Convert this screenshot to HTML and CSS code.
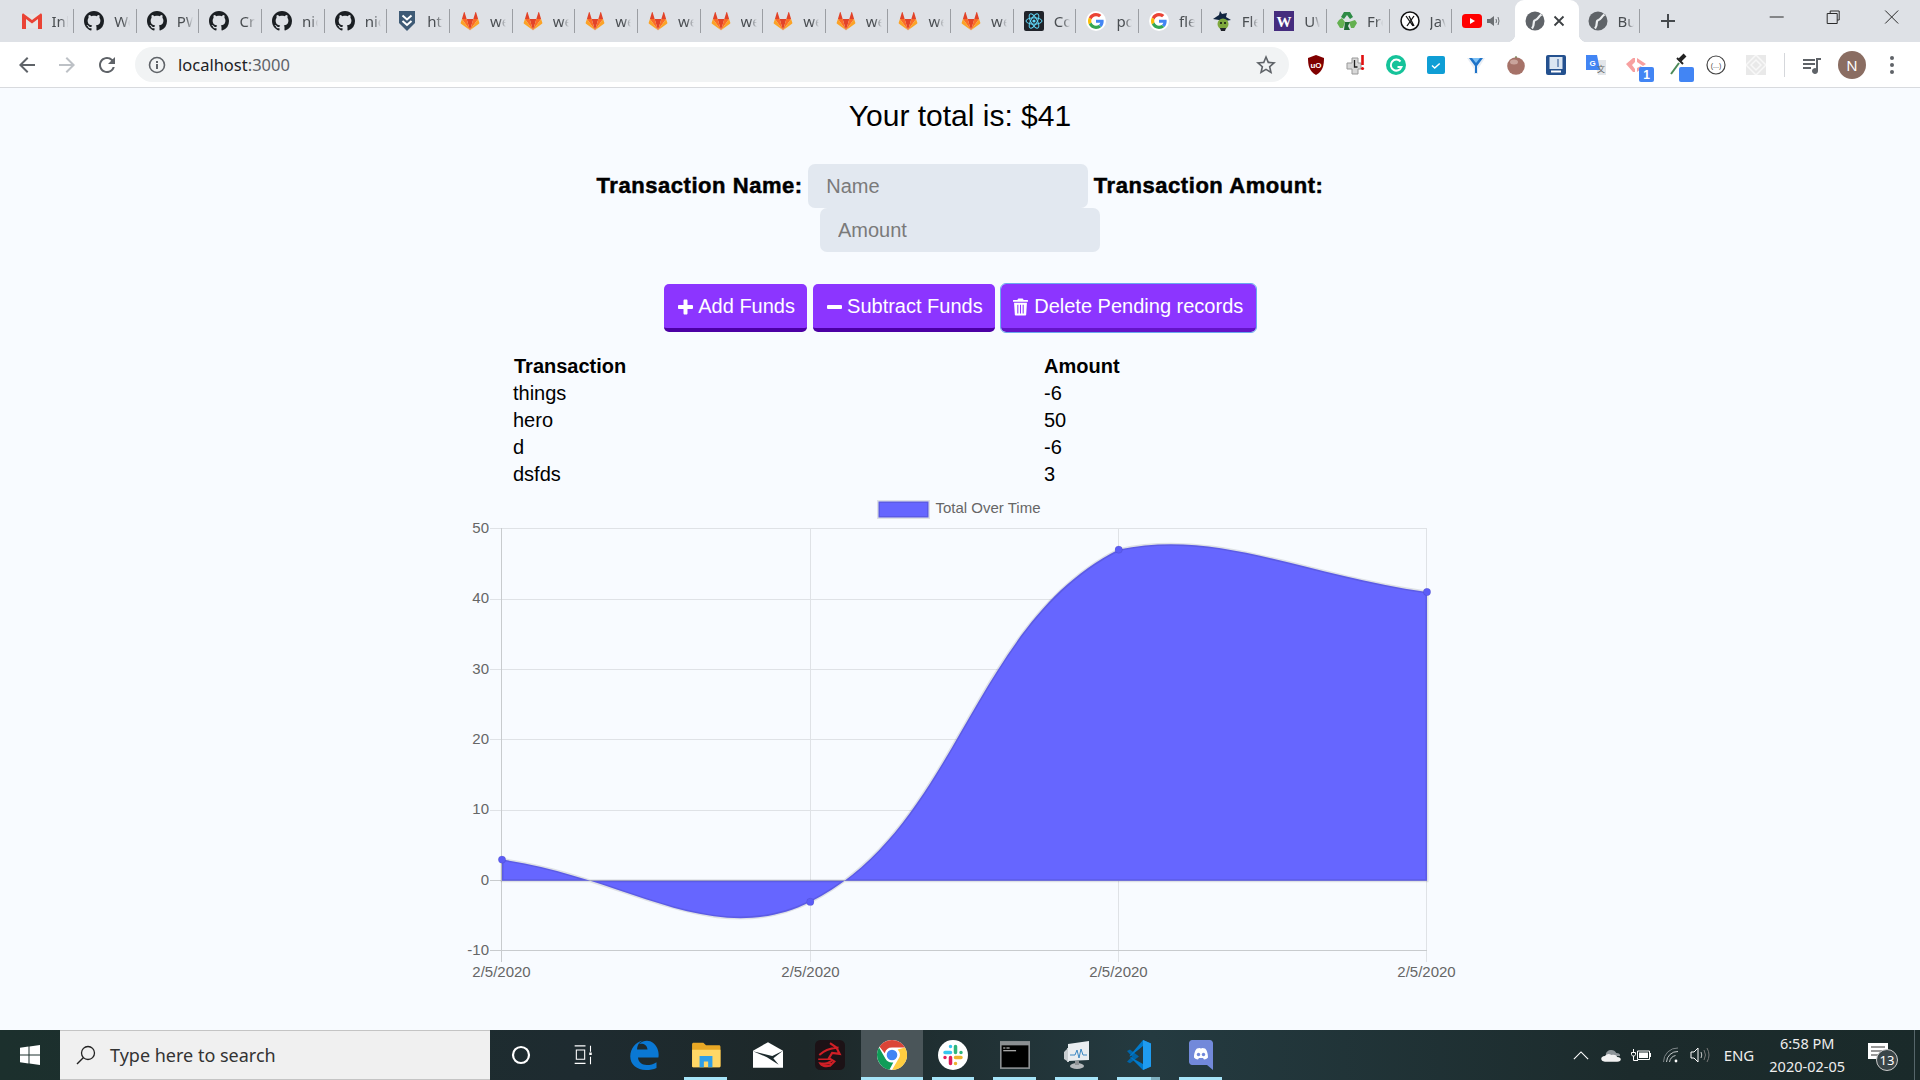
FILE: index.html
```html
<!DOCTYPE html>
<html lang="en">
<head>
  <meta charset="UTF-8" />
  <title>Budget Tracker</title>
  <link rel="stylesheet" href="styles.css">
</head>
<body>
  <!-- shared icons -->
  <svg class="defs" width="0" height="0">
    <symbol id="i-github" viewBox="0 0 16 16"><path fill="#1b1f23" d="M8 0C3.58 0 0 3.58 0 8c0 3.54 2.29 6.53 5.47 7.59.4.07.55-.17.55-.38 0-.19-.01-.82-.01-1.49-2.01.37-2.53-.49-2.69-.94-.09-.23-.48-.94-.82-1.13-.28-.15-.68-.52-.01-.53.63-.01 1.08.58 1.23.82.72 1.21 1.87.87 2.33.66.07-.52.28-.87.51-1.07-1.78-.2-3.64-.89-3.64-3.95 0-.87.31-1.59.82-2.15-.08-.2-.36-1.02.08-2.12 0 0 .67-.21 2.2.82.64-.18 1.32-.27 2-.27.68 0 1.36.09 2 .27 1.53-1.04 2.2-.82 2.2-.82.44 1.1.16 1.92.08 2.12.51.56.82 1.27.82 2.15 0 3.07-1.87 3.75-3.65 3.95.29.25.54.73.54 1.48 0 1.07-.01 1.93-.01 2.2 0 .21.15.46.55.38A8.013 8.013 0 0016 8c0-4.42-3.58-8-8-8z"/></symbol>
    <symbol id="i-gitlab" viewBox="0 0 24 24">
      <path fill="#e24329" d="M12 23 8 9.500h8z"/>
      <path fill="#fc6d26" d="M12 23 8 9.500H2.300zM12 23l4-13.500h5.700z"/>
      <path fill="#fca326" d="M2.300 9.500.8 14.200c-.1.500 0 .9.400 1.200L12 23zM21.700 9.500l1.500 4.700c.1.500 0 .9-.4 1.200L12 23z"/>
      <path fill="#e24329" d="M2.300 9.500H8L5.500 1.500c-.1-.4-.6-.4-.8 0zM21.700 9.500H16l2.500-8c.1-.4.600-.4.8 0z"/>
    </symbol>
    <symbol id="i-google" viewBox="-6 -6 60 60">
      <circle cx="24" cy="24" r="30" fill="#fff"/>
      <path fill="#EA4335" d="M24 9.500c3.540 0 6.710 1.220 9.210 3.600l6.850-6.850C35.900 2.380 30.470 0 24 0 14.620 0 6.510 5.380 2.560 13.220l7.980 6.190C12.430 13.720 17.740 9.500 24 9.500z"/>
      <path fill="#4285F4" d="M46.980 24.550c0-1.570-.15-3.090-.38-4.550H24v9.020h12.940c-.58 2.960-2.260 5.480-4.780 7.180l7.730 6c4.510-4.180 7.090-10.360 7.090-17.650z"/>
      <path fill="#FBBC05" d="M10.530 28.590c-.48-1.450-.76-2.990-.76-4.590s.27-3.140.76-4.590l-7.980-6.190C.92 16.460 0 20.120 0 24c0 3.880.92 7.540 2.560 10.780l7.970-6.190z"/>
      <path fill="#34A853" d="M24 48c6.480 0 11.930-2.130 15.890-5.810l-7.730-6c-2.150 1.450-4.920 2.300-8.160 2.300-6.260 0-11.570-4.220-13.470-9.910l-7.980 6.190C6.510 42.620 14.620 48 24 48z"/>
    </symbol>
    <symbol id="i-globe" viewBox="0 0 20 20">
      <circle cx="10" cy="10" r="9.500" fill="#5f6368"/>
      <path fill="none" stroke="#eceef0" stroke-width="2.200" d="M16.500 3.500C13 5.500 13.500 8 10.500 9 7 10 10.500 13 7 17.500"/>
    </symbol>
  </svg>

  <div class="tabstrip">
    <div class="tab"><svg class="fav" viewBox="0 0 20 16"><path fill="#e5e5e5" d="M1 1h18v14H1z"/><path fill="#ea4335" d="M0 2c0-1 1-2 2-1l8 6 8-6c1-1 2 0 2 1v14h-4V6l-6 4.500L4 6v10H0z"/></svg><span class="tab-title">Inbox</span></div>
    <div class="tab"><svg class="fav"><use href="#i-github"/></svg><span class="tab-title">Workout</span></div>
    <div class="tab"><svg class="fav"><use href="#i-github"/></svg><span class="tab-title">PWA</span></div>
    <div class="tab"><svg class="fav"><use href="#i-github"/></svg><span class="tab-title">Create</span></div>
    <div class="tab"><svg class="fav"><use href="#i-github"/></svg><span class="tab-title">nick</span></div>
    <div class="tab"><svg class="fav"><use href="#i-github"/></svg><span class="tab-title">nick</span></div>
    <div class="tab"><svg class="fav" viewBox="0 0 20 20"><path fill="#3e5a75" d="M2 0h16v12l-8 8-8-8z"/><path fill="none" stroke="#fff" stroke-width="2" d="M5.500 4.500 10 8.500l4.500-4M5.500 10l4.500 4 4.500-4"/></svg><span class="tab-title">https</span></div>
    <div class="tab"><svg class="fav"><use href="#i-gitlab"/></svg><span class="tab-title">web</span></div>
    <div class="tab"><svg class="fav"><use href="#i-gitlab"/></svg><span class="tab-title">web</span></div>
    <div class="tab"><svg class="fav"><use href="#i-gitlab"/></svg><span class="tab-title">web</span></div>
    <div class="tab"><svg class="fav"><use href="#i-gitlab"/></svg><span class="tab-title">web</span></div>
    <div class="tab"><svg class="fav"><use href="#i-gitlab"/></svg><span class="tab-title">web</span></div>
    <div class="tab"><svg class="fav"><use href="#i-gitlab"/></svg><span class="tab-title">web</span></div>
    <div class="tab"><svg class="fav"><use href="#i-gitlab"/></svg><span class="tab-title">web</span></div>
    <div class="tab"><svg class="fav"><use href="#i-gitlab"/></svg><span class="tab-title">web</span></div>
    <div class="tab"><svg class="fav"><use href="#i-gitlab"/></svg><span class="tab-title">web</span></div>
    <div class="tab"><svg class="fav" viewBox="0 0 20 20"><rect width="20" height="20" rx="2" fill="#20232a"/><g fill="none" stroke="#61dafb" stroke-width="1"><ellipse cx="10" cy="10" rx="8" ry="3.200"/><ellipse cx="10" cy="10" rx="8" ry="3.200" transform="rotate(60 10 10)"/><ellipse cx="10" cy="10" rx="8" ry="3.200" transform="rotate(120 10 10)"/></g><circle cx="10" cy="10" r="1.600" fill="#61dafb"/></svg><span class="tab-title">Code</span></div>
    <div class="tab"><svg class="fav"><use href="#i-google"/></svg><span class="tab-title">pdf</span></div>
    <div class="tab"><svg class="fav"><use href="#i-google"/></svg><span class="tab-title">flex</span></div>
    <div class="tab"><svg class="fav" viewBox="0 0 20 20"><path fill="#10243f" d="M1 8 7 4l1-4 2 3 5-1-1 4 5 3-6 1z"/><circle cx="11" cy="13" r="5.500" fill="#7ea83c"/><circle cx="9" cy="12" r="1" fill="#111"/><circle cx="13" cy="12" r="1" fill="#111"/><path fill="#20232a" d="M8 17h6l-1 3h-4z"/></svg><span class="tab-title">Flex</span></div>
    <div class="tab"><svg class="fav" viewBox="0 0 20 20"><rect width="20" height="20" fill="#452c7e"/><text x="10" y="15.500" class="fav-letter">W</text></svg><span class="tab-title">UW</span></div>
    <div class="tab"><svg class="fav" viewBox="0 0 20 20"><path fill="#2e8b46" d="M7 1h6l3 5-3 2-3-4-3 4-3-2z"/><path fill="#64b050" d="M2 9l3-2 3 4-2 6H3l-3-5zM18 9l2 3-3 5h-3l-2-6z"/><path fill="#1f6b35" d="M8 11h5l-2 4 2 4H7z"/></svg><span class="tab-title">Free</span></div>
    <div class="tab"><svg class="fav" viewBox="0 0 20 20"><circle cx="10" cy="10" r="9" fill="#fff" stroke="#111" stroke-width="1.500"/><path fill="none" stroke="#111" stroke-width="1.300" d="M6 5l7 10M14 5 7 15M9 5l5 10"/></svg><span class="tab-title">Java</span></div>
    <div class="tab tab-no-line"><svg class="fav" viewBox="0 0 20 20"><rect y="3" width="20" height="14" rx="3.500" fill="#f00"/><path fill="#fff" d="m8 7 5 3-5 3z"/></svg><svg class="speaker" viewBox="0 0 14 14"><path fill="#6b6f73" d="M1 5h3l4-3v10L4 9H1z"/><path fill="none" stroke="#6b6f73" d="M10 5q1 2 0 4M12 3q2 4 0 8"/></svg></div>
    <div class="tab tab-active"><svg class="fav"><use href="#i-globe"/></svg><svg class="tab-close" viewBox="0 0 12 12"><path stroke="#3c4043" stroke-width="1.800" d="m1.500 1.500 9 9m0-9-9 9"/></svg></div>
    <div class="tab"><svg class="fav"><use href="#i-globe"/></svg><span class="tab-title">Budget</span></div>
    <svg class="new-tab" viewBox="0 0 16 16"><path stroke="#45494d" stroke-width="2" d="M8 1v14M1 8h14"/></svg>
    <div class="window-btns">
      <svg viewBox="0 0 14 14"><path stroke="#2a2a2a" d="M0 7h14"/></svg>
      <svg viewBox="0 0 14 14"><path fill="none" stroke="#2a2a2a" d="M3.500 3V1h9v9h-2M.5 3.500h10v10H.5z"/></svg>
      <svg viewBox="0 0 14 14"><path stroke="#2a2a2a" d="m.5.5 13 13m0-13-13 13"/></svg>
    </div>
  </div>

  <div class="toolbar">
    <svg class="nav-icon" viewBox="0 0 24 24"><path fill="#5f6368" d="M20 11H7.830l5.590-5.590L12 4l-8 8 8 8 1.410-1.410L7.830 13H20v-2z"/></svg>
    <svg class="nav-icon" viewBox="0 0 24 24"><path fill="#bdc1c6" d="M12 4l-1.410 1.410L16.170 11H4v2h12.170l-5.580 5.590L12 20l8-8z"/></svg>
    <svg class="nav-icon" viewBox="0 0 24 24"><path fill="#5f6368" d="M17.650 6.350A7.958 7.958 0 0012 4c-4.420 0-7.990 3.580-7.990 8s3.570 8 7.990 8c3.730 0 6.840-2.550 7.730-6h-2.080A5.990 5.990 0 0112 18c-3.310 0-6-2.690-6-6s2.690-6 6-6c1.660 0 3.140.69 4.220 1.780L13 11h7V4l-2.350 2.350z"/></svg>
    <div class="omnibox">
      <svg class="info" viewBox="0 0 18 18"><circle cx="9" cy="9" r="7.500" fill="none" stroke="#5f6368" stroke-width="1.600"/><path fill="#5f6368" d="M8 8h2v5H8zM8 5h2v2H8z"/></svg>
      <span class="url">localhost<span class="url-port">:3000</span></span>
      <svg class="star" viewBox="0 0 24 24"><path fill="#5f6368" d="M22 9.240l-7.190-.62L12 2 9.190 8.630 2 9.240l5.460 4.730L5.820 21 12 17.270 18.180 21l-1.630-7.030L22 9.240zM12 15.400l-3.760 2.270 1-4.280-3.320-2.880 4.380-.38L12 6.100l1.710 4.040 4.380.38-3.320 2.880 1 4.280L12 15.400z"/></svg>
    </div>
    <div class="extensions">
      <svg viewBox="0 0 20 20"><path fill="#800000" d="M10 0l8 3c0 7-1 13-8 17C3 16 2 10 2 3z"/><text x="10" y="12.500" class="ext-letter">uO</text></svg>
      <svg viewBox="0 0 20 20"><path fill="#d8d8d8" stroke="#999" d="M6 3h6v5h3v6h-3v5H6v-5H1V8h5z"/><path stroke="#222" stroke-width="1.300" fill="none" d="M8.500 5v7h3"/><path stroke="#e01010" stroke-width="2.600" d="M16.500 0v10"/><circle cx="16.500" cy="13.500" r="1.600" fill="#e01010"/></svg>
      <svg viewBox="0 0 20 20"><circle cx="10" cy="10" r="10" fill="#15c39a"/><path fill="none" stroke="#fff" stroke-width="2" d="M14.500 6.500a5.500 5.500 0 1 0 1 5.500h-4"/></svg>
      <svg viewBox="0 0 20 20"><rect x="1" y="1" width="18" height="18" rx="2" fill="#0f9ed5"/><path fill="none" stroke="#fff" stroke-width="1.500" d="m6 10.500 2.700 2.500 5-4.500"/></svg>
      <svg viewBox="0 0 20 20"><path fill="#e8eef5" d="M1 3h18L12 14v5H8v-5z"/><path fill="#1e73c8" d="M3 3h14l-6 8v7H9v-7z"/><path fill="#7cc0f5" d="M6 3h8l-4 5z"/></svg>
      <svg viewBox="0 0 20 20"><circle cx="10" cy="11" r="8.800" fill="#a67268"/><ellipse cx="8" cy="7" rx="4" ry="2.500" fill="#c9a49b"/><path stroke="#556b2f" d="M10 3V1"/></svg>
      <svg viewBox="0 0 20 20"><rect width="20" height="20" rx="2" fill="#24518f"/><rect x="3.500" y="2" width="13" height="12" fill="#dbe6f2"/><path stroke="#24518f" d="M12 4v8"/><path stroke="#fff" stroke-width="2" d="M5 16.500h10"/></svg>
      <svg viewBox="0 0 20 20"><path fill="#e3e6ea" d="M8 5h12v15H12z"/><path fill="#4285f4" d="M0 0h11l3 15H0z"/><text x="6.500" y="10.500" class="ext-g">G</text><text x="15" y="17" class="ext-zh">文</text></svg>
      <svg class="ext-big" viewBox="0 0 40 40"><path fill="#f7a0a0" d="M10 19l7-6h2v4l-3 3 3 4v3h-2zM21 13l9 6-3 2-6-4zM21 23l4-2 1 2-5 4z"/><rect x="23" y="22" width="15" height="15" rx="2" fill="#4285f4"/><text x="30.500" y="34" class="ext-badge">1</text></svg>
      <svg class="ext-big" viewBox="0 0 40 40"><path stroke="#222" stroke-width="4" d="M29 10l-5 5"/><path stroke="#222" stroke-width="2" d="M21 13l6 6"/><path stroke="#4c8a58" stroke-width="2" d="M23 18 15 29"/><rect x="23" y="22" width="15" height="15" rx="2" fill="#4285f4"/></svg>
      <svg viewBox="0 0 20 20"><circle cx="10" cy="10" r="9" fill="#fff" stroke="#444" stroke-width="1.200"/><text x="10" y="12.500" class="ext-brace">(...)</text></svg>
      <svg viewBox="0 0 20 20"><rect width="20" height="20" fill="#e9e9e9"/><path fill="none" stroke="#f8f8f8" stroke-width="1.500" d="M0 10 10 0l10 10-10 10zM5 10l5-5 5 5-5 5z"/></svg>
    </div>
    <div class="toolbar-sep"></div>
    <svg class="nav-icon" viewBox="0 0 24 24"><path fill="#5f6368" d="M3 6h12v2H3zM3 10h12v2H3zM3 14h8v2H3zM16 5h5v2h-3v11a3 3 0 1 1-2-2.800z"/></svg>
    <div class="avatar">N</div>
    <svg class="nav-icon" viewBox="0 0 24 24"><g fill="#5f6368"><circle cx="12" cy="5" r="2"/><circle cx="12" cy="12" r="2"/><circle cx="12" cy="19" r="2"/></g></svg>
  </div>

  <main class="page">
    <h1 class="total">Your total is: $41</h1>

    <form class="tx-form">
      <label class="tx-label">Transaction Name:</label>
      <input class="tx-input" placeholder="Name">
      <label class="tx-label">Transaction Amount:</label>
      <input class="tx-input" placeholder="Amount">
    </form>

    <div class="actions">
      <button class="btn" type="button"><svg class="btn-icon" viewBox="0 0 16 16"><path fill="#fff" d="M6 1.500c0-.5.500-1 1-1h2c.5 0 1 .5 1 1V6h4.500c.5 0 1 .5 1 1v2c0 .5-.5 1-1 1H10v4.500c0 .5-.5 1-1 1H7c-.5 0-1-.5-1-1V10H1.500c-.5 0-1-.5-1-1V7c0-.5.500-1 1-1H6z"/></svg>Add Funds</button>
      <button class="btn" type="button"><svg class="btn-icon" viewBox="0 0 16 16"><rect x=".5" y="6" width="15" height="4" rx="1" fill="#fff"/></svg>Subtract Funds</button>
      <button class="btn btn-focus" type="button"><svg class="btn-icon btn-icon-trash" viewBox="0 0 14 16"><path fill="#fff" fill-rule="evenodd" d="M5 0h4l1 1.500h3.500c.3 0 .5.200.5.500v1H0V2c0-.3.200-.5.500-.5H4zM1 4h12l-.7 11c0 .5-.5 1-1 1H2.700c-.5 0-1-.5-1-1zM4 6v8h1V6zm2.500 0v8h1V6zM9 6v8h1V6z"/></svg>Delete Pending records</button>
    </div>

    <table class="tx-table">
      <thead>
        <tr><th>Transaction</th><th>Amount</th></tr>
      </thead>
      <tbody>
        <tr><td>things</td><td>-6</td></tr>
        <tr><td>hero</td><td>50</td></tr>
        <tr><td>d</td><td>-6</td></tr>
        <tr><td>dsfds</td><td>3</td></tr>
      </tbody>
    </table>

    <svg class="chart" width="1000" height="500" viewBox="0 0 1000 500">
      <!-- legend -->
      <rect class="series" x="418.500" y="11.500" width="50" height="16"/>
      <text class="chart-text" x="475.500" y="23">Total Over Time</text>

      <!-- grid -->
      <path class="grid" d="M350.500 38v434M658.500 38v434M966.500 38v434M30 38.500h937M30 109.500h937M30 179.500h937M30 249.500h937M30 320.500h937"/>
      <path class="grid-axis" d="M41.500 38v434M30 390.500h937M30 460.500h937"/>

      <!-- y labels -->
      <text class="chart-text y-label" x="29" y="42.500">50</text>
      <text class="chart-text y-label" x="29" y="113">40</text>
      <text class="chart-text y-label" x="29" y="183.500">30</text>
      <text class="chart-text y-label" x="29" y="253.500">20</text>
      <text class="chart-text y-label" x="29" y="324">10</text>
      <text class="chart-text y-label" x="29" y="394.500">0</text>
      <text class="chart-text y-label" x="29" y="464.500">-10</text>

      <!-- x labels -->
      <text class="chart-text x-label" x="41.500" y="487">2/5/2020</text>
      <text class="chart-text x-label" x="350.500" y="487">2/5/2020</text>
      <text class="chart-text x-label" x="658.500" y="487">2/5/2020</text>
      <text class="chart-text x-label" x="966.500" y="487">2/5/2020</text>

      <!-- series -->
      <path class="series" d="M42 369.600C165.300 386.500 251.800 460.500 350.300 411.900C498.500 337.400 510.500 134.100 658.700 59.600C757.200 38.500 843.700 85 967 102V390.700H42Z"/>
      <circle class="point" cx="42" cy="369.600" r="3.700"/>
      <circle class="point" cx="350.300" cy="411.900" r="3.700"/>
      <circle class="point" cx="658.700" cy="59.600" r="3.700"/>
      <circle class="point" cx="967" cy="102" r="3.700"/>
    </svg>
  </main>

  <div class="taskbar">
    <svg class="start" viewBox="0 0 20 20"><path fill="#fff" d="M0 2.800 8.500 1.600v8H0zM9.500 1.500 20 0v9.600H9.500zM0 10.500h8.500v8L0 17.200zM9.500 10.500H20V20L9.500 18.600z"/></svg>
    <div class="search">
      <svg viewBox="0 0 20 20"><circle cx="12" cy="8" r="6.500" fill="none" stroke="#222" stroke-width="1.300"/><path stroke="#222" stroke-width="1.500" d="M7.500 12.500 1 19"/></svg>
      <span>Type here to search</span>
    </div>
    <div class="task-icons">
      <div class="task task-small"><svg viewBox="0 0 20 20"><circle cx="10" cy="10" r="8" fill="none" stroke="#fff" stroke-width="2.200"/></svg></div>
      <div class="task task-small"><svg viewBox="0 0 22 24"><path fill="none" stroke="#fff" stroke-width="1.300" d="M1 1h13M1 22h13M3 6h10v11H3zM20 1v7M20 14v9"/><path stroke="#fff" stroke-width="3" d="M20 9v3"/></svg></div>
      <div class="task"><svg viewBox="0 0 24 24"><path fill="#0a78d4" d="M23.500 14H7.200c.3 3.800 3.300 6 7 6 2.800 0 5.500-.8 7.800-2.300v4.600c-2.400 1.100-5.300 1.700-8.500 1.700C6.300 24 1 19.700 1 13 1 7 5.500 1.400 11 .4 7 2 6.500 6 6.500 7.500h8.300C14.500 4 12 2.500 8 3c3-2.300 6-3 9-2 5 2 7.500 8 6.500 13z"/></svg></div>
      <div class="task task-on"><svg viewBox="0 0 28 24"><path fill="#e9a825" d="M1 2c0-1 .5-1.500 1.500-1.500h9L14 3h12c1 0 1.500.5 1.500 1.500V22c0 1-.5 1.500-1.500 1.500H2.500C1.500 23.500 1 23 1 22z"/><path fill="#ffd766" d="M1 7h26.500v15c0 1-.5 1.500-1.500 1.500H2.500C1.500 23.500 1 23 1 22z"/><path fill="#2f9fe8" d="M8 13h12v10.500h-4V18h-4v5.500H8z"/></svg></div>
      <div class="task"><svg viewBox="0 0 28 24"><path fill="#fff" d="M14 0 28 8v16H0V8z"/><path fill="#1c2a2d" d="M0 8.500 18 13 28 8l-9 7 5 6L13 14z"/></svg></div>
      <div class="task"><svg viewBox="0 0 28 28"><rect width="28" height="28" rx="5" fill="#1c1216"/><path fill="none" stroke="#d11f26" stroke-width="2" d="M4 14c5-4 8-6 18-7M14 3l6 4 3 6-7-1-3 5 5 3-4 4c-4 1-8 0-9-2 4 1 9-1 11-3"/><path fill="none" stroke="#d11f26" stroke-width="1.500" d="M3 18h12M5 22h10"/></svg></div>
      <div class="task task-on task-active"><svg viewBox="0 0 48 48"><circle cx="24" cy="24" r="24" fill="#fff"/><path fill="#db4437" d="M24 0a24 24 0 0 1 20.800 12H24a12 12 0 0 0-11.600 9L4.100 10.700A24 24 0 0 1 24 0z"/><path fill="#0f9d58" d="M3.200 12 13.600 30a12 12 0 0 0 12.500 5.800L19.800 47.600A24 24 0 0 1 3.200 12z"/><path fill="#ffcd40" d="M44.800 12a24 24 0 0 1-20.800 36l10.400-18A12 12 0 0 0 33 15z"/><circle cx="24" cy="24" r="11" fill="#fff"/><circle cx="24" cy="24" r="8.500" fill="#4285f4"/></svg></div>
      <div class="task task-on"><svg viewBox="0 0 30 30"><circle cx="15" cy="15" r="15" fill="#fff"/><g stroke-width="3.500" stroke-linecap="round"><path stroke="#36c5f0" d="M7 12.500h5.500M12.500 6.500v.1"/><path stroke="#2eb67d" d="M17.500 6.500v6M23 12.500v.1"/><path stroke="#ecb22e" d="M17.500 17.500H23M17.500 23.500v.1"/><path stroke="#e01e5a" d="M12.500 17.500v6M7 17.500v.1"/></g></svg></div>
      <div class="task task-on"><svg viewBox="0 0 28 26"><rect width="28" height="26" fill="#8b8f92"/><rect x="1.500" y="4" width="25" height="20.500" fill="#000"/><path stroke="#ddd" d="M3 6.500h2M6 6.500h3M3 9h12"/></svg></div>
      <div class="task task-on"><svg viewBox="0 0 28 30"><path fill="#c8cdd0" d="M4 8h2v14H4zM1 12l3-3v12l-3-2z"/><path fill="#e9edf0" d="M5 4 26 1v19L5 21z"/><path fill="none" stroke="#3b88c3" d="M7 15h5l2-5 2 8 2-9 2 6h4"/><ellipse cx="14" cy="26" rx="7" ry="3" fill="#b5b9bc"/><path fill="#8e9295" d="M12 21h4v4h-4z"/></svg></div>
      <div class="task task-on task-on-edge"><svg viewBox="0 0 24 30"><path fill="#0065a9" d="M0 11 3 9.500l9 7-9 6.800-3-1.500 5-5.300z"/><path fill="#007acc" d="M16 0l8 3.500v23L16 30 3 17l-.5-.4L16 24V6L3 16.600 2.500 16z"/><path fill="#1f9cf0" d="M16 0l8 3.500v23L16 30z"/></svg></div>
      <div class="task task-on"><svg viewBox="0 0 24 30"><path fill="#7289da" d="M3 0h18c1.500 0 3 1.500 3 3v27l-6-5H3c-1.500 0-3-1.500-3-3V3c0-1.500 1.500-3 3-3z"/><path fill="#fff" d="M5 17.500C5 13 6.500 9.500 8 8.500c2-.8 3-.8 4 .1 1-.9 2-.9 4-.1 1.500 1 3 4.500 3 9-1 1.200-2.500 2-4 2l-1-1.500h-4L9 19.500c-1.500 0-3-.8-4-2z"/><circle cx="9.500" cy="14.500" r="1.700" fill="#7289da"/><circle cx="14.500" cy="14.500" r="1.700" fill="#7289da"/></svg></div>
    </div>
    <div class="tray">
      <svg class="tray-chev" viewBox="0 0 18 10"><path fill="none" stroke="#fff" stroke-width="1.300" d="m1 9 8-8 8 8"/></svg>
      <svg class="tray-cloud" viewBox="0 0 22 14"><path fill="#8e9599" d="M5 6a6 6 0 0 1 11-1c3 0 4 1 4 3H6z"/><path fill="#f2f2f2" d="M4 14c-5 0-5-6 0-6 2-2 4-3 7-1 3-1 5 0 6 2 5 0 5 5 0 5z"/></svg>
      <svg class="tray-batt" viewBox="0 0 20 12"><path fill="none" stroke="#fff" d="M2.500 0v3M.5 3.500h4v2c0 1-1 1.500-2 1.500S.5 6.500.5 5.500zM2.500 7v4.500H7M6.500 2h12v8.500h-12z"/><path fill="#fff" d="M8 3.500h9v5.500H8zM19 4h1v4h-1z"/></svg>
      <svg class="tray-wifi" viewBox="0 0 16 16"><g fill="none" stroke-width="1"><path stroke="#7d8587" d="M.5 15A14 14 0 0 1 15 1"/><path stroke="#c4c9ca" d="M3.500 15A11 11 0 0 1 15 4.500M6.500 15a8 8 0 0 1 6-6.500"/></g><circle cx="13" cy="14" r="1.400" fill="#fff"/></svg>
      <svg class="tray-vol" viewBox="0 0 20 16"><path fill="none" stroke="#fff" d="M1 5h3l4-4v14l-4-4H1z"/><path fill="none" stroke="#ccc" d="M11 5q1.500 3 0 6"/><path fill="none" stroke="#777" d="M14 3q3 5 0 10M17 1q4 7 0 14"/></svg>
      <span class="tray-lang">ENG</span>
      <div class="clock"><span>6:58 PM</span><span>2020-02-05</span></div>
      <div class="notify">
        <svg viewBox="0 0 20 18"><path fill="#fff" d="M0 0h20v16H0z"/><path stroke="#333" d="M3 4h14M3 8h14M3 12h9"/></svg>
        <span class="notify-badge">13</span>
      </div>
    </div>
  </div>
</body>
</html>
```

FILE: styles.css
```css
* {
  box-sizing: border-box;
}
html, body {
  height: 100%;
}
body {
  margin: 0;
  display: flex;
  flex-direction: column;
  height: 100vh;
  overflow: hidden;
  font-family: "Liberation Sans", Arial, sans-serif;
  background: #f8fbff;
}
.defs {
  position: absolute;
}

/* browser tabs */
.tabstrip {
  display: flex;
  align-items: center;
  flex: none;
  height: 42px;
  padding-left: 13.500px;
  background: #dee1e6;
}
.tab {
  position: relative;
  display: flex;
  align-items: center;
  flex: none;
  width: 62.650px;
  height: 42px;
  padding-left: 8px;
}
.tab::after {
  content: "";
  position: absolute;
  right: 2px;
  top: 9px;
  width: 1px;
  height: 24px;
  background: #9b9ea3;
}
.tab-no-line::after {
  display: none;
}
.fav {
  flex: none;
  width: 20px;
  height: 20px;
}
.tab-title {
  width: 16px;
  margin-left: 10px;
  overflow: hidden;
  white-space: clip;
  font: 15px "Noto Sans", sans-serif;
  color: #4a4e52;
  -webkit-mask-image: linear-gradient(to right, #000 55%, transparent);
  mask-image: linear-gradient(to right, #000 55%, transparent);
}
.fav-letter {
  font: bold 15px "Liberation Serif", serif;
  fill: #fff;
  text-anchor: middle;
}
.speaker {
  width: 14px;
  height: 14px;
  margin-left: 4px;
}
.tab-active {
  width: 64px;
  margin: 0 .65px 0 -2px;
  padding-left: 10px;
  border-radius: 9px 9px 0 0;
  background: #fff;
}
/* curved feet either side of the open tab */
.tab-active::before,
.tab-active::after {
  content: "";
  position: absolute;
  top: auto;
  bottom: 0;
  width: 8px;
  height: 8px;
}
.tab-active::before {
  left: -8px;
  right: auto;
  background: radial-gradient(circle at 0 0, #dee1e6 8px, #fff 8.500px);
}
.tab-active::after {
  right: -8px;
  background: radial-gradient(circle at 100% 0, #dee1e6 8px, #fff 8.500px);
}
.tab-active .tab-close {
  width: 12px;
  height: 12px;
  margin-left: 8px;
}
.new-tab {
  width: 16px;
  height: 16px;
  margin-left: 17.600px;
}
.window-btns {
  display: flex;
  align-items: center;
  margin-left: auto;
  height: 34px;
  align-self: flex-start;
}
.window-btns svg {
  width: 57.4px;
  height: 14px;
}

/* address bar */
.toolbar {
  display: flex;
  align-items: center;
  flex: none;
  height: 46px;
  padding-left: 7px;
  background: #fff;
  border-bottom: 1px solid #d8dade;
}
.nav-icon {
  flex: none;
  width: 24px;
  height: 24px;
  margin: 0 8px;
}
.omnibox {
  display: flex;
  align-items: center;
  width: 1154px;
  height: 35px;
  margin-left: 8px;
  padding: 0 11px 0 13px;
  border-radius: 18px;
  background: #f1f3f4;
}
.info {
  width: 18px;
  height: 18px;
}
.url {
  margin-left: 12px;
  font: 16.500px "Noto Sans", sans-serif;
  color: #202124;
}
.url-port {
  color: #5f6368;
}
.star {
  width: 24px;
  height: 24px;
  margin-left: auto;
}
.extensions {
  display: flex;
  align-items: center;
  margin-left: 7px;
}
.extensions svg {
  width: 20px;
  height: 20px;
  margin: 0 10px;
  flex: none;
}
.extensions .ext-big {
  width: 40px;
  height: 40px;
  margin: 0;
}
.ext-letter {
  font: bold 8px "Liberation Sans", sans-serif;
  fill: #fff;
  text-anchor: middle;
}
.ext-g {
  font: bold 8px "Liberation Sans", sans-serif;
  fill: #fff;
  text-anchor: middle;
}
.ext-zh {
  font: 8px "Noto Sans CJK SC", sans-serif;
  fill: #666;
  text-anchor: middle;
}
.ext-badge {
  font: bold 12px "Liberation Sans", sans-serif;
  fill: #fff;
  text-anchor: middle;
}
.ext-brace {
  font: 7px "Liberation Sans", sans-serif;
  fill: #444;
  text-anchor: middle;
}
.toolbar-sep {
  width: 1px;
  height: 24px;
  margin: 0 7px 0 8px;
  background: #d5d7db;
}
.avatar {
  flex: none;
  width: 28px;
  height: 28px;
  margin: 0 6px;
  border-radius: 50%;
  background: #8a6d62;
  color: #fff;
  font: 15px/28px "Noto Sans", sans-serif;
  text-align: center;
}

/* budget page */
.page {
  flex: 1;
  min-height: 0;
  overflow: hidden;
  text-align: center;
  font-size: 20px;
  color: #000;
}
.total {
  margin: 10px 0 0;
  font-size: 30px;
  line-height: 36px;
  font-weight: 400;
}
.tx-form {
  width: 900px;
  margin: 30px auto 0;
}
.tx-label {
  font-size: 22px;
  font-weight: 700;
  letter-spacing: .55px;
  -webkit-text-stroke: .5px #000;
}
.tx-input {
  width: 280px;
  height: 44px;
  padding: 0 18px;
  border: 0;
  border-radius: 7px;
  background: #e2e8f0;
  font: 20px "Liberation Sans", sans-serif;
}
.tx-input::placeholder {
  color: #7a7a7a;
  opacity: 1;
}
.actions {
  margin-top: 32px;
}
.btn {
  height: 48px;
  padding: 1px 12.500px 0;
  border: 0;
  border-bottom: 4px solid #4c00a4;
  border-radius: 5px;
  background: #8c35ff;
  color: #fff;
  font: 20px "Liberation Sans", sans-serif;
  vertical-align: top;
}
.btn-focus {
  outline: 1px solid #6aa9ee;
  border-bottom-color: #6414c8;
}
.btn-icon {
  width: 17px;
  height: 16px;
  margin-right: 4.500px;
  vertical-align: -2px;
}
.btn-icon-trash {
  width: 15px;
  height: 18px;
  margin-right: 6px;
  vertical-align: -3px;
}
.tx-table {
  width: 900px;
  margin: 21px auto 0;
  border-collapse: collapse;
  text-align: left;
  line-height: 27px;
}
.tx-table th,
.tx-table td {
  padding: 0 0 0 3px;
}
.tx-table th:first-child,
.tx-table td:first-child {
  width: 531px;
}
.tx-table th:first-child {
  padding-left: 4px;
}
.tx-table th {
  font-weight: 700;
}
.chart {
  display: block;
  margin: 2px auto 0;
}
.chart-text {
  font: 15px "Liberation Sans", sans-serif;
  fill: #666;
}
.y-label {
  text-anchor: end;
}
.x-label {
  text-anchor: middle;
}
.grid {
  fill: none;
  stroke: #dfe2e6;
  stroke-width: 1;
}
.grid-axis {
  fill: none;
  stroke: #c8cbce;
  stroke-width: 1;
}
.series {
  fill: #6666ff;
  stroke: rgba(0, 0, 0, .1);
  stroke-width: 3;
}
.point {
  fill: #5c5cf6;
  stroke: rgba(0, 0, 0, .08);
  stroke-width: 1;
}

/* windows taskbar */
.taskbar {
  display: flex;
  align-items: center;
  flex: none;
  height: 50px;
  background: linear-gradient(to right, #1c302d, #1e2b30 30%, #1d2829 42%, #243a40 60%, #1c2b2c 85%, #1a2a2a);
  color: #fff;
}
.start {
  flex: none;
  width: 20px;
  height: 20px;
  margin: 0 20px;
}
.search {
  display: flex;
  align-items: center;
  width: 430px;
  height: 50px;
  padding-left: 16px;
  background: #f0f0f0;
  border-top: 1px solid #c4c4c4;
  border-bottom: 1px solid #c4c4c4;
  color: #333;
  font: 18px "Noto Sans", sans-serif;
}
.search svg {
  width: 20px;
  height: 20px;
  margin-right: 14px;
}
.task-icons {
  display: flex;
  height: 50px;
}
.task {
  position: relative;
  display: flex;
  align-items: center;
  justify-content: center;
  width: 61.800px;
  height: 50px;
}
.task svg {
  width: 30px;
  height: 30px;
}
.task-small svg {
  width: 20px;
  height: 20px;
}
.task-on::after {
  content: "";
  position: absolute;
  left: 9px;
  right: 10px;
  bottom: 0;
  height: 3px;
  background: #a6e4f8;
}
.task-active {
  background: #4a5559;
}
.task-active::after {
  left: 0;
  right: 0;
}
.task-on-edge::after {
  background: linear-gradient(to right, #a6e4f8 80%, #7eb0bf 80%);
}
.tray {
  display: flex;
  align-items: center;
  flex: 1;
  height: 50px;
  justify-content: flex-end;
  margin-right: 5px;
  padding-right: 12px;
  border-right: 1px solid #56666a;
}
.tray-chev {
  width: 16px;
  height: 9px;
}
.tray-cloud {
  width: 21px;
  height: 14px;
  margin-left: 12px;
}
.tray-batt {
  width: 20px;
  height: 12px;
  margin-left: 9px;
}
.tray-wifi {
  width: 16px;
  height: 16px;
  margin-left: 12px;
}
.tray-vol {
  width: 20px;
  height: 16px;
  margin-left: 11px;
}
.tray-lang {
  margin-left: 14px;
  font: 15px "Noto Sans", sans-serif;
  color: #eee;
}
.clock {
  display: flex;
  flex-direction: column;
  align-items: center;
  margin-left: 15px;
  font: 14.500px/23px "Noto Sans", sans-serif;
  color: #eee;
}
.notify {
  position: relative;
  width: 30px;
  height: 34px;
  margin-left: 23px;
  margin-right: 4px;
}
.notify svg {
  position: absolute;
  left: 0;
  top: 5px;
  width: 20px;
  height: 18px;
}
.notify-badge {
  position: absolute;
  left: 8px;
  top: 11px;
  width: 22px;
  height: 22px;
  border: 1px solid #ccc;
  border-radius: 50%;
  background: #3a4548;
  color: #fff;
  font: 13px/20px "Noto Sans", sans-serif;
  text-align: center;
}
```
